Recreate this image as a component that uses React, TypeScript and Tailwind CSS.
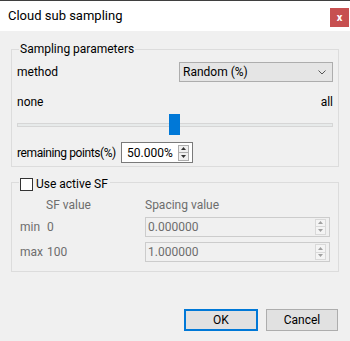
import React from "react";

const font = { fontFamily: 'Roboto, "Noto Sans", sans-serif' };

function SpinArrows({ disabled }: { disabled?: boolean }) {
  const c = disabled ? "#a0a0a0" : "#333";
  const b = disabled ? "#d9d9d9" : "#adadad";
  return (
    <div className="flex flex-col h-full justify-center pr-[3px]">
      <div className="w-[11px] h-[16px] flex flex-col border" style={{ borderColor: b, background: disabled ? "#f4f4f4" : "#f0f0f0" }}>
        <div className="flex-1 flex items-center justify-center border-b" style={{ borderColor: b }}>
          <svg width="5" height="3" viewBox="0 0 5 3"><path d="M2.5 0 L5 3 L0 3 Z" fill={c} /></svg>
        </div>
        <div className="flex-1 flex items-center justify-center">
          <svg width="5" height="3" viewBox="0 0 5 3"><path d="M0 0 L5 0 L2.5 3 Z" fill={c} /></svg>
        </div>
      </div>
    </div>
  );
}

export default function App() {
  return (
    <div className="w-[350px] h-[341px] bg-[#f0f0f0] border-t border-[#3f3f3f] flex flex-col text-[12px] text-black" style={font}>
      <div className="h-[30px] bg-white flex items-start justify-between">
        <div className="pl-[8px] pt-[7px] text-[13px] leading-[16px]">Cloud sub sampling</div>
        <div className="mt-[7px] mr-[1px] w-[19px] h-[19px] bg-[#c75050] flex items-center justify-center text-white text-[11px] font-bold leading-none">x</div>
      </div>

      <div className="px-[11px] pr-[11px]">
        {/* Group 1 */}
        <div className="relative mt-[18px] border border-[#dcdcdc] h-[118px] px-[5px]">
          <div className="absolute left-[7px] top-[-9px] bg-[#f0f0f0] px-[1px] leading-[16px]">Sampling parameters</div>
          <div className="mt-[12px] flex items-center justify-between h-[20px]">
            <span>method</span>
            <div className="w-[154px] h-[20px] border border-[#adadad] bg-[#e5e5e5] flex items-center justify-between pl-[3px] pr-[6px]">
              <span>Random (%)</span>
              <svg width="8" height="5" viewBox="0 0 8 5"><path d="M0.5 0.5 L4 4 L7.5 0.5" fill="none" stroke="#555" strokeWidth="1" /></svg>
            </div>
          </div>
          <div className="mt-[12px] h-[16px] flex items-center justify-between">
            <span>none</span>
            <span>all</span>
          </div>
          <div className="mt-[4px] h-[21px] relative flex items-center">
            <div className="w-full h-[4px] bg-[#e7eaea] border border-[#d6d6d6]"></div>
            <div className="absolute left-[152px] top-0 w-[11px] h-[21px] bg-[#0078d7]"></div>
          </div>
          <div className="mt-[7px] h-[21px] flex items-center">
            <span className="w-[104px] shrink-0 whitespace-nowrap tracking-[-0.4px]">remaining points(%)</span>
            <div className="w-[72px] shrink-0 h-[21px] border border-[#7a7a7a] bg-white flex items-center justify-between pl-[5px]">
              <span>50.000%</span>
              <SpinArrows />
            </div>
          </div>
        </div>

        {/* Group 2 */}
        <div className="relative mt-[15px] border border-[#dcdcdc] h-[90px] text-[#6d6d6d]">
          <div className="absolute left-[7px] top-[-7px] bg-[#f0f0f0] pl-[1px] pr-[2px] flex items-center gap-[3px] text-black leading-[16px]">
            <div className="w-[13px] h-[13px] bg-white border border-[#333]"></div>
            <span>Use active SF</span>
          </div>
          <div className="mt-[14px] h-[16px] flex items-center">
            <span className="ml-[34px] w-[99px]">SF value</span>
            <span>Spacing value</span>
          </div>
          <div className="mt-[4px] h-[19px] flex items-center">
            <span className="ml-[8px] w-[27px]">min</span>
            <span className="w-[98px]">0</span>
            <div className="w-[185px] h-[20px] border border-[#cccccc] bg-[#f0f0f0] flex items-center justify-between pl-[2px]">
              <span>0.000000</span>
              <SpinArrows disabled />
            </div>
          </div>
          <div className="mt-[6px] h-[20px] flex items-center">
            <span className="ml-[8px] w-[27px]">max</span>
            <span className="w-[98px]">100</span>
            <div className="w-[185px] h-[20px] border border-[#cccccc] bg-[#f0f0f0] flex items-center justify-between pl-[2px]">
              <span>1.000000</span>
              <SpinArrows disabled />
            </div>
          </div>
        </div>
      </div>

      <div className="mt-[37px] flex justify-end gap-[8px] pr-[12px]">
        <div className="w-[74px] h-[22px] border-2 border-[#0078d7] bg-[#e1e1e1] flex items-center justify-center">OK</div>
        <div className="w-[72px] h-[22px] border border-[#adadad] bg-[#e1e1e1] flex items-center justify-center">Cancel</div>
      </div>
    </div>
  );
}
